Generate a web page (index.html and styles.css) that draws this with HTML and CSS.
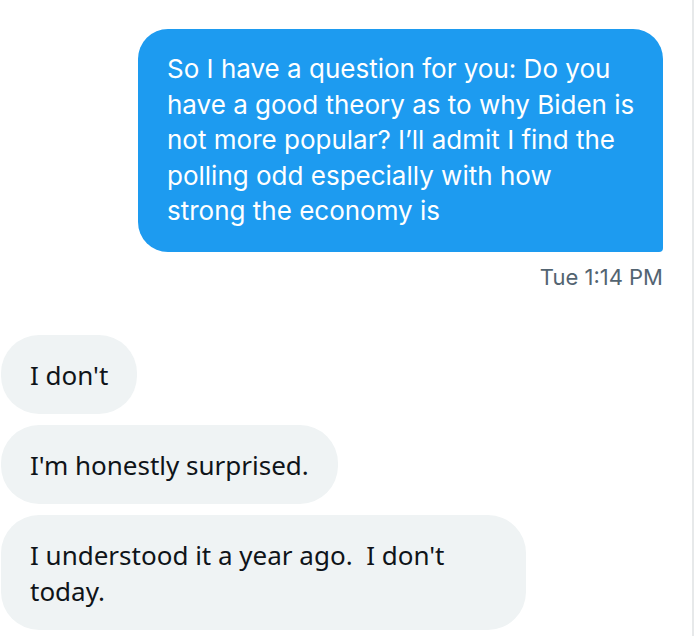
FILE: index.html
```html
<!DOCTYPE html>
<html>
<head>
<meta charset="utf-8">
<link rel="stylesheet" href="styles.css">
</head>
<body>
<div class="chat">
  <div class="sent-group">
    <div class="bubble sent">So I have a question for you: Do you have a good theory as to why Biden is not more popular? I’ll admit I find the polling odd especially with how strong the economy is</div>
    <div class="time">Tue 1:14 PM</div>
  </div>
  <div class="recv-group">
    <div class="bubble recv">I don't</div>
    <div class="bubble recv">I'm honestly surprised.</div>
    <div class="bubble recv">I understood it a year ago.&nbsp; I don't today.</div>
  </div>
</div>
</body>
</html>
```
FILE: styles.css
```css
html, body {
  margin: 0;
  padding: 0;
  background: #ffffff;
}
.chat {
  width: 694px;
  height: 636px;
  border-right: 2px solid #e7e9ea;
  box-sizing: border-box;
  overflow: hidden;
}
.sent-group {
  display: flex;
  flex-direction: column;
  align-items: flex-end;
  padding: 29px 29px 0 0;
}
.bubble.sent {
  width: 525px;
  box-sizing: border-box;
  background: #1d9bf0;
  color: #ffffff;
  font-family: "Inter", "Liberation Sans", sans-serif;
  font-size: 26px;
  line-height: 35.5px;
  padding: 22px 28px 23px 29px;
  border-radius: 30px 30px 4px 30px;
}
.time {
  margin-top: 13px;
  font-family: "Inter", "Liberation Sans", sans-serif;
  font-size: 22px;
  color: #536471;
  line-height: 24px;
}
.recv-group {
  display: flex;
  flex-direction: column;
  align-items: flex-start;
  gap: 11px;
  padding: 46px 0 0 1px;
}
.bubble.recv {
  background: #eff3f4;
  color: #0f1419;
  font-family: "Noto Sans", "Open Sans", sans-serif;
  font-size: 26px;
  line-height: 36px;
  padding: 22px 29px 21px 29px;
  border-radius: 38px;
  max-width: 525px;
  box-sizing: border-box;
}
```
